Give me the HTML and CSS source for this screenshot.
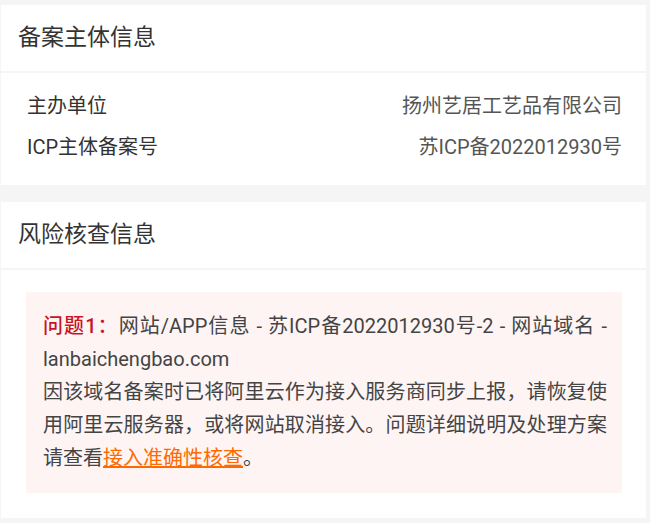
FILE: index.html
```html
<!DOCTYPE html>
<html lang="zh-CN">
<head>
  <meta charset="UTF-8">
  <meta name="viewport" content="width=device-width, initial-scale=1.0">
  <title>备案信息</title>
  <link rel="stylesheet" href="styles.css">
</head>
<body>

<div class="section">
  <div class="section-title">备案主体信息</div>
  <div class="section-body info-body">
    <div class="info-row">
      <span class="info-label">主办单位</span>
      <span class="info-value">扬州艺居工艺品有限公司</span>
    </div>
    <div class="info-row">
      <span class="info-label">ICP主体备案号</span>
      <span class="info-value">苏ICP备2022012930号</span>
    </div>
  </div>
</div>

<div class="section">
  <div class="section-title">风险核查信息</div>
  <div class="section-body risk-body">
    <div class="risk-box">
      <span class="risk-tag">问题1：</span>网站/APP信息 - 苏ICP备2022012930号-2 - 网站域名 - lanbaichengbao.com<br>
      因该域名备案时已将阿里云作为接入服务商同步上报，请恢复使用阿里云服务器，或将网站取消接入。问题详细说明及处理方案请查看<a href="#" class="risk-link">接入准确性核查</a>。
    </div>
  </div>
</div>

</body>
</html>
```

FILE: styles.css
```css
body {
  font-family: Roboto, "Noto Sans CJK SC", sans-serif;
  background-color: #f5f5f5;
  color: #333;
  margin: 0;
  padding: 5px 4px 0 1px;
}

.section {
  margin-bottom: 17px;
}

.section-title {
  background-color: #fff;
  height: 66px;
  line-height: 66px;
  padding-left: 17px;
  font-size: 23px;
  color: #333;
  margin-bottom: 2px;
}

.section-body {
  background-color: #fff;
}

.info-body {
  padding: 13px 24px 17px 26px;
}

.info-row {
  display: flex;
  justify-content: space-between;
  height: 41px;
  line-height: 41px;
  font-size: 20px;
}

.info-label {
  color: #333;
}

.info-value {
  color: #555;
}

.risk-body {
  padding: 22px 24px 25px 25px;
}

.risk-box {
  background-color: #fef4f4;
  padding: 18px 15px 18px 17px;
  font-size: 20px;
  line-height: 33px;
  color: #444;
  text-align: justify;
}

.risk-tag {
  color: #c7161e;
  font-weight: 500;
}

.risk-link {
  color: #ff6a00;
  text-decoration: underline;
}
```
